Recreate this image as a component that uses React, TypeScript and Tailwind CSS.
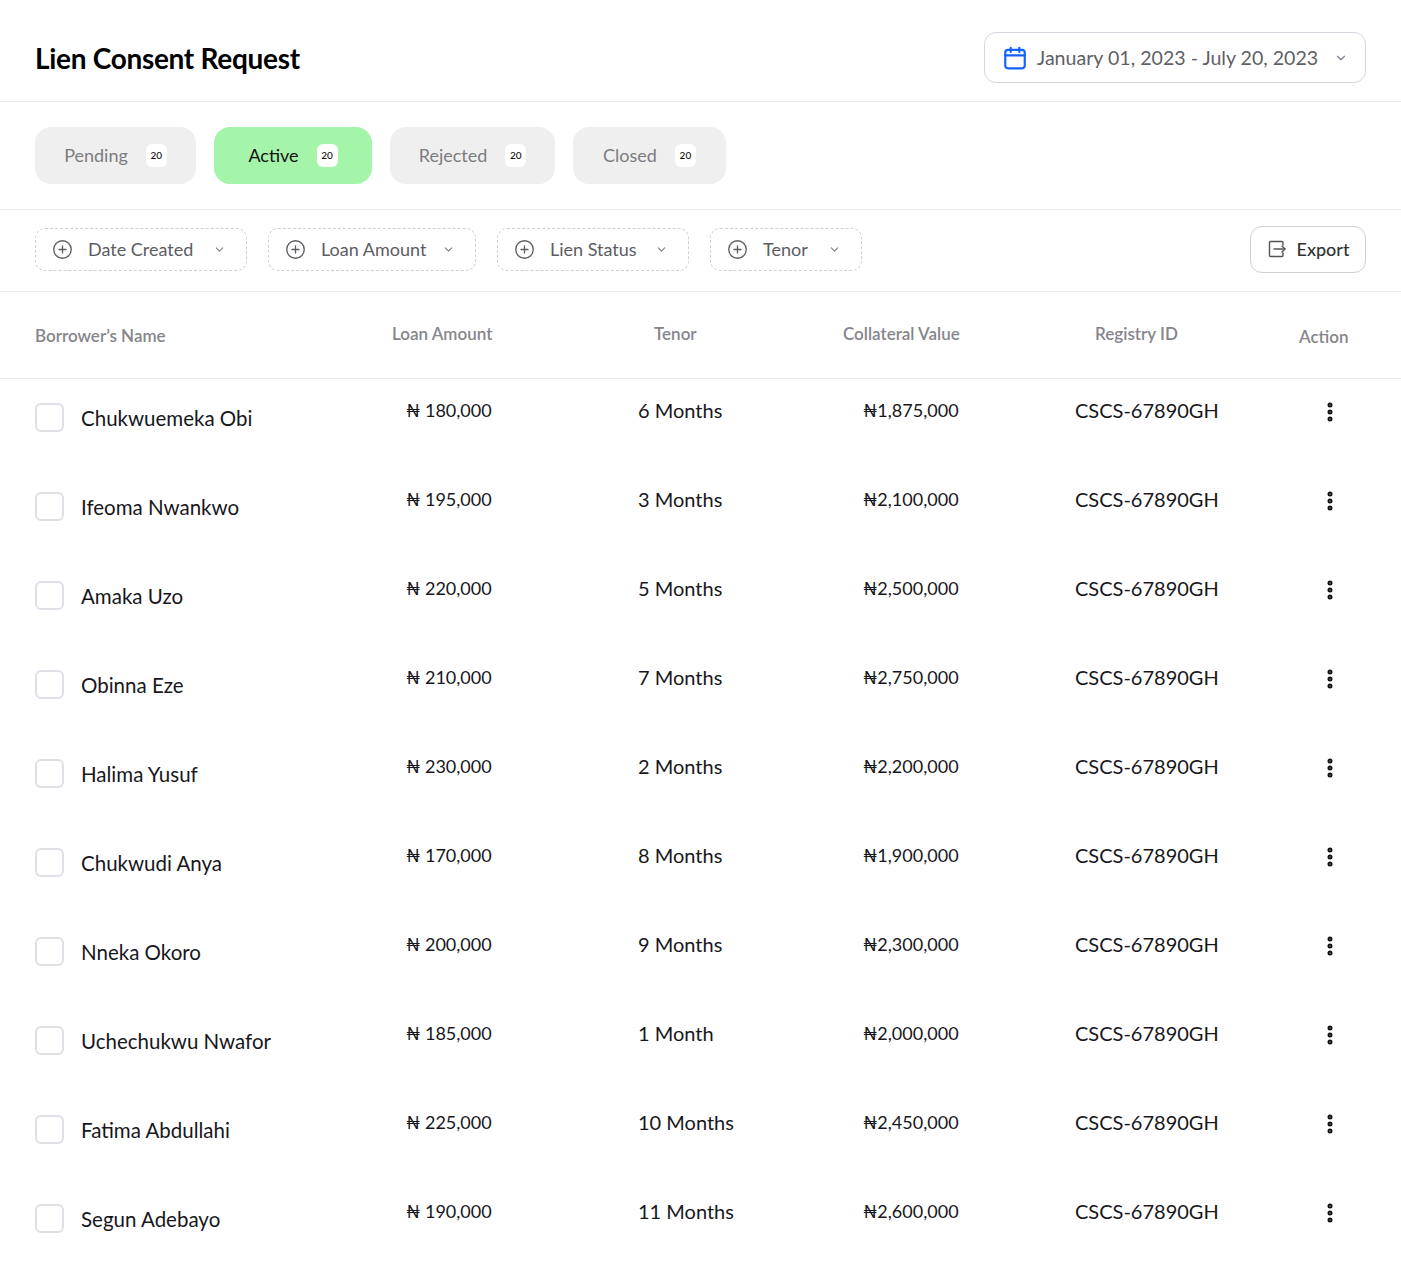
import { ChevronDown, EllipsisVertical, CirclePlus } from "lucide-react";

type Row = {
  name: string;
  amount: string;
  tenor: string;
  collateral: string;
  registry: string;
};

const rows: Row[] = [
  { name: "Chukwuemeka Obi", amount: "₦ 180,000", tenor: "6 Months", collateral: "₦1,875,000", registry: "CSCS-67890GH" },
  { name: "Ifeoma Nwankwo", amount: "₦ 195,000", tenor: "3 Months", collateral: "₦2,100,000", registry: "CSCS-67890GH" },
  { name: "Amaka Uzo", amount: "₦ 220,000", tenor: "5 Months", collateral: "₦2,500,000", registry: "CSCS-67890GH" },
  { name: "Obinna Eze", amount: "₦ 210,000", tenor: "7 Months", collateral: "₦2,750,000", registry: "CSCS-67890GH" },
  { name: "Halima Yusuf", amount: "₦ 230,000", tenor: "2 Months", collateral: "₦2,200,000", registry: "CSCS-67890GH" },
  { name: "Chukwudi Anya", amount: "₦ 170,000", tenor: "8 Months", collateral: "₦1,900,000", registry: "CSCS-67890GH" },
  { name: "Nneka Okoro", amount: "₦ 200,000", tenor: "9 Months", collateral: "₦2,300,000", registry: "CSCS-67890GH" },
  { name: "Uchechukwu Nwafor", amount: "₦ 185,000", tenor: "1 Month", collateral: "₦2,000,000", registry: "CSCS-67890GH" },
  { name: "Fatima Abdullahi", amount: "₦ 225,000", tenor: "10 Months", collateral: "₦2,450,000", registry: "CSCS-67890GH" },
  { name: "Segun Adebayo", amount: "₦ 190,000", tenor: "11 Months", collateral: "₦2,600,000", registry: "CSCS-67890GH" },
];

const tabs = [
  { label: "Pending", count: 20, width: "w-[161px]" },
  { label: "Active", count: 20, width: "w-[158px]" },
  { label: "Rejected", count: 20, width: "w-[165px]" },
  { label: "Closed", count: 20, width: "w-[153px]" },
];

const filters = [
  { label: "Date Created", width: "w-[212px]" },
  { label: "Loan Amount", width: "w-[208px]" },
  { label: "Lien Status", width: "w-[192px]" },
  { label: "Tenor", width: "w-[152px]" },
];

const cols = "grid grid-cols-[371px_232px_225px_212px_224px_1fr]";

function CalendarIcon() {
  return (
    <svg width="26" height="26" viewBox="0 0 24 24" fill="none" stroke="#1463ff" strokeWidth="2" strokeLinecap="round" strokeLinejoin="round">
      <rect x="3" y="4.5" width="18" height="17" rx="2.5" />
      <path d="M3 9.5h18" />
      <path d="M8 2.5v4" />
      <path d="M16 2.5v4" />
    </svg>
  );
}

function ExportIcon() {
  return (
    <svg width="20" height="20" viewBox="0 0 20 20" fill="none" stroke="#555" strokeWidth="1.4" strokeLinecap="round" strokeLinejoin="round">
      <path d="M16 6V3.5a1 1 0 0 0-1-1H3.5a1 1 0 0 0-1 1v13a1 1 0 0 0 1 1H15a1 1 0 0 0 1-1V14" />
      <path d="M7 10h11" />
      <path d="M15 7l3 3-3 3" />
    </svg>
  );
}

export default function App() {
  return (
    <div className="min-h-[1282px] w-[1401px] bg-white text-[#17171c] font-['Lato','Inter',sans-serif]">
      {/* header */}
      <div className="flex h-[102px] items-center justify-between border-b border-[#ededed] px-[35px] pt-[14px]">
        <h1 className="text-[28px] font-bold tracking-[-0.3px] text-black">Lien Consent Request</h1>
        <button className="flex h-[51px] w-[382px] items-center gap-[9px] rounded-[12px] border border-[#d3d6dd] pl-[17px] pr-[17px]">
          <CalendarIcon />
          <span className="whitespace-nowrap text-[19.6px] text-[#5f5f66]">January 01, 2023 - July 20, 2023</span>
          <ChevronDown size={14} className="ml-auto text-[#7a7f8c]" />
        </button>
      </div>

      {/* tabs */}
      <div className="flex h-[108px] items-center gap-[18px] border-b border-[#ededed] px-[35px]">
        {tabs.map((t) => {
          const active = t.label === "Active";
          return (
            <div
              key={t.label}
              className={
                active
                  ? `flex h-[57px] ${t.width} items-center justify-center gap-[18px] rounded-[16px] bg-[#a4f4a9] text-[18px] text-[#111]`
                  : `flex h-[57px] ${t.width} items-center justify-center gap-[18px] rounded-[16px] bg-[#efefef] text-[18px] text-[#7c7c80]`
              }
            >
              <span>{t.label}</span>
              <span className="flex h-[23px] w-[21px] items-center justify-center rounded-[6px] bg-white text-[10px] font-medium text-[#111]">
                {t.count}
              </span>
            </div>
          );
        })}
      </div>

      {/* filters */}
      <div className="flex h-[82px] items-center border-b border-[#ededed] px-[35px] pb-[3px]">
        <div className="flex items-center gap-[21px]">
          {filters.map((f) => (
            <div
              key={f.label}
              className={`flex h-[43px] ${f.width} items-center rounded-[10px] border border-dashed border-[#cfcfd4] pl-[16px] pr-[20px]`}
            >
              <CirclePlus size={21} strokeWidth={1.5} className="text-[#5c5c63]" />
              <span className="ml-[15px] text-[18px] text-[#5c5c63]">{f.label}</span>
              <ChevronDown size={13} className="ml-auto text-[#7a7f8c]" />
            </div>
          ))}
        </div>
        <button className="ml-auto flex h-[47px] w-[116px] items-center justify-center gap-[10px] rounded-[12px] border border-[#cfcfd4] text-[18px] font-medium text-[#333]">
          <ExportIcon />
          Export
        </button>
      </div>

      {/* table header */}
      <div className={`${cols} h-[87px] items-center border-b border-[#ededed] pb-[2px] pl-[35px] text-[17px] font-semibold text-[#85858b]`}>
        <div className="pt-[4px]">Borrower’s Name</div>
        <div className="-ml-[14px]">Loan Amount</div>
        <div className="ml-[16px]">Tenor</div>
        <div className="-ml-[20px]">Collateral Value</div>
        <div className="ml-[20px]">Registry ID</div>
        <div className="pt-[5px]">Action</div>
      </div>

      {/* rows */}
      <div>
        {rows.map((r) => (
          <div key={r.name} className={`${cols} h-[89px] items-start pl-[35px] text-[20px] text-[#17171c]`}>
            <div className="flex items-center gap-[17px] pt-[24px]">
              <span className="h-[29px] w-[29px] shrink-0 rounded-[6px] border-2 border-[#dde0e6]" />
              <span className="text-[20.5px] leading-[28px]">{r.name}</span>
            </div>
            <div className="pt-[17px] text-[18px] leading-[28px]">{r.amount}</div>
            <div className="pt-[17px] leading-[28px]">{r.tenor}</div>
            <div className="pt-[17px] text-[18px] leading-[28px]">{r.collateral}</div>
            <div className="pt-[17px] leading-[28px]">{r.registry}</div>
            <div className="pt-[21px] pl-[19px]">
              <EllipsisVertical size={24} strokeWidth={3} className="text-[#111]" />
            </div>
          </div>
        ))}
      </div>
    </div>
  );
}
